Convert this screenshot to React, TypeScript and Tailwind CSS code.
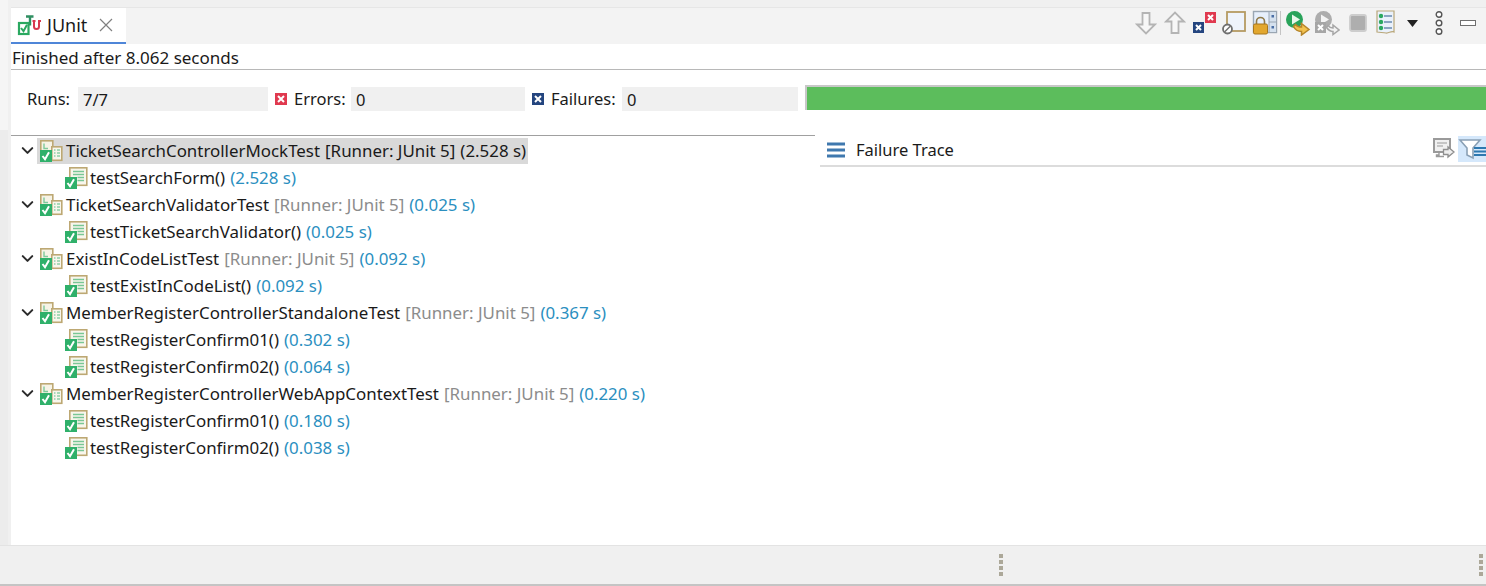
import React from 'react';
import { ChevronDown } from 'lucide-react';

interface TreeRow {
  name: string;
  runner?: string;
  time: string;
  selected?: boolean;
}

const rows: TreeRow[] = [
  { name: 'TicketSearchControllerMockTest', runner: '[Runner: JUnit 5]', time: '(2.528 s)', selected: true },
  { name: 'testSearchForm()', time: '(2.528 s)' },
  { name: 'TicketSearchValidatorTest', runner: '[Runner: JUnit 5]', time: '(0.025 s)' },
  { name: 'testTicketSearchValidator()', time: '(0.025 s)' },
  { name: 'ExistInCodeListTest', runner: '[Runner: JUnit 5]', time: '(0.092 s)' },
  { name: 'testExistInCodeList()', time: '(0.092 s)' },
  { name: 'MemberRegisterControllerStandaloneTest', runner: '[Runner: JUnit 5]', time: '(0.367 s)' },
  { name: 'testRegisterConfirm01()', time: '(0.302 s)' },
  { name: 'testRegisterConfirm02()', time: '(0.064 s)' },
  { name: 'MemberRegisterControllerWebAppContextTest', runner: '[Runner: JUnit 5]', time: '(0.220 s)' },
  { name: 'testRegisterConfirm01()', time: '(0.180 s)' },
  { name: 'testRegisterConfirm02()', time: '(0.038 s)' },
];

const CheckBadge = ({ x, y }: { x: number; y: number }) => (
  <g>
    <rect x={x} y={y} width="12" height="12" fill="#2fb06a" />
    <path d={`M${x + 2.5} ${y + 6}l2.500 3.200 4-7`} fill="none" stroke="#fff" strokeWidth="2" />
  </g>
);

const SuiteIcon = () => (
  <svg width="24" height="24" viewBox="0 0 24 24" className="shrink-0">
    <rect x="1.800" y="1.800" width="12" height="11" fill="#f6f3e6" stroke="#bda873" strokeWidth="1.600" />
    <path d="M5 4.500v5h4" fill="none" stroke="#7fc99b" strokeWidth="1.400" />
    <rect x="12.800" y="7.800" width="10" height="13.500" fill="#f8f6ec" stroke="#bda873" strokeWidth="1.600" />
    <path d="M15 11h1.500M18 11h3M15 14h1.500M18 14h3M15 17h1.500M18 17h3" stroke="#8fd0a8" strokeWidth="1.300" />
    <CheckBadge x={1} y={11} />
  </svg>
);

const TestIcon = () => (
  <svg width="24" height="24" viewBox="0 0 24 24" className="shrink-0">
    <rect x="5.800" y="1.800" width="17" height="17.500" fill="#f8f6ec" stroke="#bda873" strokeWidth="1.600" />
    <path d="M9 5.500h11M9 8.500h11M13.500 11.500h6.500M13.500 14.500h6.500" stroke="#79c795" strokeWidth="1.600" />
    <CheckBadge x={1} y={11} />
  </svg>
);

const CrossBox = ({ x, y, size, fill }: { x: number; y: number; size: number; fill: string }) => (
  <g>
    <rect x={x} y={y} width={size} height={size} fill={fill} />
    <path
      d={`M${x + 3} ${y + 3}L${x + size - 3} ${y + size - 3}M${x + size - 3} ${y + 3}L${x + 3} ${y + size - 3}`}
      stroke="#fff"
      strokeWidth="2"
    />
  </g>
);

const ErrorIcon = () => (
  <svg width="12" height="12" viewBox="0 0 12 12" className="shrink-0">
    <CrossBox x={0} y={0} size={12} fill="#e0394f" />
  </svg>
);

const FailureIcon = () => (
  <svg width="12" height="12" viewBox="0 0 12 12" className="shrink-0">
    <CrossBox x={0} y={0} size={12} fill="#24457f" />
  </svg>
);

const JUnitIcon = () => (
  <svg width="26" height="24" viewBox="0 0 26 24" className="shrink-0">
    <path d="M9 3.500h7.500M13 3.500v9" stroke="#2f8f62" strokeWidth="2.400" fill="none" />
    <rect x="2" y="10" width="9.500" height="11" fill="#fff" stroke="#2aa860" strokeWidth="2.200" />
    <path d="M4 15l2.500 3.200 3.500-6.500" fill="none" stroke="#2aa860" strokeWidth="2" />
    <path d="M15.500 8h3M21 8h3M17 8v5.500a2.500 2.500 0 0 0 5 0V8" fill="none" stroke="#d8384f" strokeWidth="2" />
  </svg>
);

const ArrowDown = () => (
  <svg width="22" height="24" viewBox="0 0 22 24">
    <path d="M7.500 2h7v11.500h5.500L11 22.500 2 13.500h5.500z" fill="#f7f7f7" stroke="#b4b4b4" strokeWidth="1.800" />
  </svg>
);

const ArrowUp = () => (
  <svg width="22" height="24" viewBox="0 0 22 24">
    <path d="M7.500 22h7V10.500h5.500L11 1.500 2 10.500h5.500z" fill="#f7f7f7" stroke="#b4b4b4" strokeWidth="1.800" />
  </svg>
);

const ErrorsOnly = () => (
  <svg width="26" height="24" viewBox="0 0 26 24">
    <CrossBox x={13} y={1} size={11} fill="#e0394f" />
    <CrossBox x={1} y={11} size={11} fill="#24457f" />
  </svg>
);

const ScrollLock = () => (
  <svg width="26" height="24" viewBox="0 0 26 24">
    <rect x="6" y="1" width="18" height="19" fill="#eef3fb" stroke="#b59b62" strokeWidth="1.800" />
    <circle cx="6.500" cy="18" r="4.500" fill="#fff" stroke="#6f6f6f" strokeWidth="1.800" />
    <path d="M3.500 21l6-6" stroke="#6f6f6f" strokeWidth="1.500" />
  </svg>
);

const LockLayout = () => (
  <svg width="26" height="26" viewBox="0 0 26 26">
    <rect x="1.500" y="1.500" width="23" height="21" fill="#e6effb" stroke="#9aa6b2" strokeWidth="1.400" />
    <rect x="17" y="1.500" width="7.500" height="21" fill="#d5e1ee" stroke="#9aa6b2" />
    <path d="M17 12h7.500" stroke="#9aa6b2" />
    <rect x="19.500" y="5" width="2.500" height="2.500" fill="#4a6fa5" />
    <rect x="19.500" y="16" width="2.500" height="2.500" fill="#4a6fa5" />
    <path d="M4.500 14.500v-3a4 4 0 0 1 8 0v3" fill="none" stroke="#8f7a4a" strokeWidth="1.600" />
    <rect x="1.500" y="14" width="14" height="10" rx="1.500" fill="#e2a72e" stroke="#a8761c" />
  </svg>
);

const RerunIcon = ({ disabled }: { disabled?: boolean }) => (
  <svg width="26" height="26" viewBox="0 0 26 26">
    <circle cx="9.500" cy="9.500" r="8.500" fill={disabled ? '#adadad' : '#29a35a'} />
    <path d="M7 4.500l8 5-8 5z" fill={disabled ? '#f4f4f4' : '#e9f7ea'} />
    {disabled ? (
      <>
        <CrossBox x={1} y={12} size={11} fill="#a6a6a6" />
        <path d="M14 15.500c1.500 2 3 2.500 5 2.500v-3l6 5-6 4.500v-3c-3 0-5-2-6.500-4z" fill="#f2f2f2" stroke="#a6a6a6" strokeWidth="1.500" />
      </>
    ) : (
      <path d="M10.500 14.500c1.500 2 3.500 2.500 6 2.500v-3.500l7.500 6-7.500 5.500v-3.500c-3.500 0-6.500-2-8-5z" fill="#f2c24f" stroke="#b5852a" strokeWidth="1.500" />
    )}
  </svg>
);

const StopIcon = () => (
  <svg width="18" height="18" viewBox="0 0 18 18">
    <rect x="1" y="1" width="16" height="16" rx="2" fill="#aeaeae" stroke="#cdcdcd" strokeWidth="1.800" />
  </svg>
);

const HistoryIcon = () => (
  <svg width="20" height="26" viewBox="0 0 20 26">
    <path d="M1 1h17v21c-3-1.500-5 1.500-8 1-3-.5-6-.5-9-1z" fill="#eaf1fb" stroke="#b9a77a" strokeWidth="1.200" />
    <path d="M8 6h8M8 12h8M8 18h8" stroke="#6a8bb0" strokeWidth="1.400" />
    <circle cx="5" cy="6" r="2.200" fill="#2aa860" />
    <circle cx="5" cy="12" r="2.200" fill="#2aa860" />
    <circle cx="5" cy="18" r="2.200" fill="#2aa860" />
  </svg>
);

const Caret = () => (
  <svg width="11" height="7" viewBox="0 0 11 7">
    <path d="M0 0h11L5.500 7z" fill="#222" />
  </svg>
);

const KebabIcon = () => (
  <svg width="8" height="24" viewBox="0 0 8 24">
    <circle cx="4" cy="3.500" r="2.800" fill="#fff" stroke="#555" strokeWidth="1.400" />
    <circle cx="4" cy="12" r="2.800" fill="#fff" stroke="#555" strokeWidth="1.400" />
    <circle cx="4" cy="20.500" r="2.800" fill="#fff" stroke="#555" strokeWidth="1.400" />
  </svg>
);

const MinimizeIcon = () => (
  <svg width="16" height="7" viewBox="0 0 16 7">
    <rect x="0.500" y="0.500" width="15" height="5" fill="#fff" stroke="#6f6f6f" />
  </svg>
);

const TraceIcon = () => (
  <svg width="18" height="18" viewBox="0 0 18 18" className="shrink-0">
    <path d="M0 3h18M0 9h18M0 15h18" stroke="#3f78ae" strokeWidth="3.200" />
  </svg>
);

const CompareIcon = () => (
  <svg width="22" height="22" viewBox="0 0 22 22">
    <rect x="1" y="1" width="16" height="13" fill="#f0f0f0" stroke="#9a9a9a" strokeWidth="2" />
    <path d="M4 5h10M4 8h6" stroke="#9a9a9a" strokeWidth="1.200" />
    <path d="M6 14v3H3.500v1.500H11" stroke="#9a9a9a" fill="none" strokeWidth="1.400" />
    <path d="M10.500 11.500h4.500V9l6 5-6 5v-2.500h-4.500z" fill="#eee" stroke="#8f8f8f" strokeWidth="1.300" />
  </svg>
);

const FilterIcon = () => (
  <svg width="28" height="24" viewBox="0 0 28 24">
    <path d="M2 3h20l-7 8v10l-6-3v-7z" fill="#fff" stroke="#8aa0b5" strokeWidth="1.600" />
    <path d="M16 11h12M16 14.500h12M16 18h12" stroke="#2d78b0" strokeWidth="2" />
  </svg>
);

const Grip = () => (
  <div className="flex flex-col gap-[2px]">
    <span className="w-[4px] h-[4px] bg-[#aca899]" />
    <span className="w-[4px] h-[4px] bg-[#aca899]" />
    <span className="w-[4px] h-[4px] bg-[#aca899]" />
    <span className="w-[4px] h-[4px] bg-[#aca899]" />
  </div>
);

const Counter = ({ label, value, width, icon, labelWidth }: { label: string; value: string; width: string; icon?: React.ReactNode; labelWidth: string }) => (
  <div className="flex items-center">
    {icon}
    <span className={`${labelWidth} leading-[26px] text-[#1a1a1a]`}>{label}</span>
    <span className={`${width} h-[24px] bg-[#f0f0f0] pl-[5px] leading-[26px] text-[#1a1a1a]`}>{value}</span>
  </div>
);

const Slot = ({ width, children }: { width: string; children: React.ReactNode }) => (
  <div className={`${width} h-[30px] flex items-center justify-center`}>{children}</div>
);

export default function App() {
  return (
    <div className="w-[1486px] h-[586px] bg-[#f0f0f0] flex flex-col overflow-hidden text-[16.900px] text-[#1a1a1a] font-['Noto_Sans',sans-serif]">
      <div className="flex-1 min-h-0 flex">
        {/* left edge of the neighbouring view */}
        <div className="w-[8px] mr-[3px] shrink-0 flex flex-col">
          <div className="h-[130px] bg-[#f5f5f5]" />
          <div className="flex-1 bg-[#ececec]" />
        </div>

        <div className="flex-1 min-w-0 pt-[7px] flex flex-col">
          {/* tab bar */}
          <div className="h-[37px] shrink-0 flex items-start bg-[#f3f3f3] border-t border-[#e6e6e6]">
            <div className="w-[115px] h-[37px] bg-white border-b-[3px] border-[#4f86d8] flex items-center pl-[6px] gap-[4px]">
              <JUnitIcon />
              <span className="text-[18px]">JUnit</span>
              <svg width="16" height="16" viewBox="0 0 16 16" className="ml-[7px]">
                <path d="M2 2l12 12M14 2L2 14" stroke="#808080" strokeWidth="1.200" />
              </svg>
            </div>
            <div className="ml-auto flex items-center pr-[3px]">
              <Slot width="w-[24px]"><ArrowDown /></Slot>
              <Slot width="w-[34px]"><ArrowUp /></Slot>
              <Slot width="w-[26px]"><ErrorsOnly /></Slot>
              <Slot width="w-[32px]"><ScrollLock /></Slot>
              <Slot width="w-[30px]"><LockLayout /></Slot>
              <div className="w-px h-[24px] bg-[#c4c4c4] mr-[4px]" />
              <Slot width="w-[26px]"><RerunIcon /></Slot>
              <Slot width="w-[32px]"><RerunIcon disabled /></Slot>
              <Slot width="w-[30px]"><StopIcon /></Slot>
              <Slot width="w-[26px]"><HistoryIcon /></Slot>
              <Slot width="w-[26px]"><Caret /></Slot>
              <Slot width="w-[28px]"><KebabIcon /></Slot>
              <Slot width="w-[30px]"><MinimizeIcon /></Slot>
            </div>
          </div>

          {/* content */}
          <div className="flex-1 min-h-0 bg-white flex flex-col">
            <div className="h-[26px] shrink-0 pl-px border-b border-[#b8b8b8] leading-[28px] text-[17px]">Finished after 8.062 seconds</div>

            <div className="h-[65px] shrink-0 pt-[16px] pl-[16px] flex items-start text-[16.500px]">
              <Counter label="Runs:" value="7/7" width="w-[190px]" labelWidth="w-[51px]" />
              <div className="w-[7px]" />
              <Counter label="Errors:" value="0" width="w-[174px]" labelWidth="w-[64px] pl-[7px]" icon={<ErrorIcon />} />
              <div className="w-[7px]" />
              <Counter label="Failures:" value="0" width="w-[176px]" labelWidth="w-[78px] pl-[7px]" icon={<FailureIcon />} />
              <div className="flex-1 ml-[7px] -mt-[1px] h-[25px] bg-[#5cbd5c] border-t-2 border-l-2 border-[#c8c8c8]" />
            </div>

            <div className="flex-1 min-h-0 flex">
              <div className="w-[804px] shrink-0 border-t border-[#a0a0a0] pt-[1px]">
                {rows.map((row, i) => (
                  <div key={i} className={`h-[27px] flex items-center ${row.runner ? 'pl-[7px]' : 'pl-[53px]'}`}>
                    {row.runner && <ChevronDown size={19} strokeWidth={2.600} className="text-[#2b2b2b] shrink-0" />}
                    <div className={`flex items-center h-[26px] ${row.selected ? 'bg-[#d9d9d9] pr-[2px]' : ''}`}>
                      {row.runner ? <div className="ml-[2px] mr-px"><SuiteIcon /></div> : <TestIcon />}
                      <span className="ml-[2px] whitespace-nowrap">{row.name}</span>
                      {row.runner && (
                        <span className={`ml-[5px] whitespace-nowrap ${row.selected ? 'text-[#1a1a1a]' : 'text-[#8c8c8c]'}`}>{row.runner}</span>
                      )}
                      <span className={`ml-[5px] whitespace-nowrap ${row.selected ? 'text-[#1a1a1a]' : 'text-[#2b8fbf]'}`}>{row.time}</span>
                    </div>
                  </div>
                ))}
              </div>
              <div className="flex-1 ml-[5px]">
                <div className="h-[32px] border-b-2 border-[#dcdcdc] flex items-center pl-[7px]">
                  <TraceIcon />
                  <span className="ml-[11px] text-[16.500px]">Failure Trace</span>
                  <div className="ml-auto flex items-center gap-[3px] -mt-[3px]">
                    <CompareIcon />
                    <div className="w-[28px] h-[26px] bg-[#d5e8fb] flex items-center justify-start overflow-hidden">
                      <FilterIcon />
                    </div>
                  </div>
                </div>
              </div>
            </div>
          </div>
        </div>
      </div>

      {/* status bar */}
      <div className="h-[41px] shrink-0 border-t border-[#e3e3e3] border-b-2 border-b-[#c4c4c4] flex items-center">
        <div className="ml-[999px]"><Grip /></div>
        <div className="ml-[476px]"><Grip /></div>
      </div>
    </div>
  );
}
